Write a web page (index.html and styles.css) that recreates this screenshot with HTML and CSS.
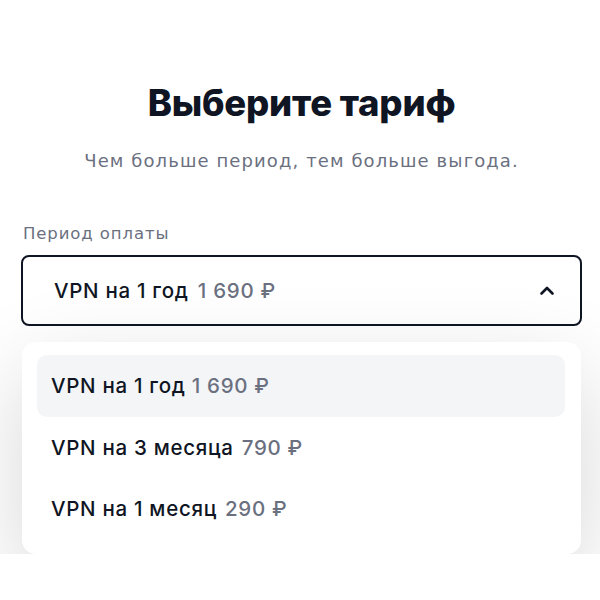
FILE: index.html
```html
<!DOCTYPE html>
<html>
<head>
<title>Выберите тариф</title>
<meta name="viewport" content="width=device-width, initial-scale=1.0">
<link rel="stylesheet" href="styles.css">
</head>
<body>

<div class="container">
    <h1>Выберите тариф</h1>
    <p class="subtitle">Чем больше период, тем больше выгода.</p>

    <label class="field-label">Период оплаты</label>
    <div class="select">
        <span class="plan">VPN на 1 год <span class="price">1 690 ₽</span></span>
        <svg class="chevron" width="18" height="18" viewBox="0 0 18 18">
            <path d="M3.5 11.5 L9 6 L14.5 11.5" fill="none" stroke="#0f1523" stroke-width="2.6" stroke-linecap="round" stroke-linejoin="round"/>
        </svg>
    </div>

    <ul class="options">
        <li class="option active">VPN на 1 год <span class="price">1 690 ₽</span></li>
        <li class="option">VPN на 3 месяца <span class="price">790 ₽</span></li>
        <li class="option">VPN на 1 месяц <span class="price">290 ₽</span></li>
    </ul>
</div>

</body>
</html>
```

FILE: styles.css
```css
body {
    font-family: 'Inter', 'Noto Sans', sans-serif;
    margin: 0;
    background-color: #ffffff;
    color: #0f1523;
}
.container {
    width: 561px;
    margin-left: 21px;
    padding-top: 78px;
}
h1 {
    margin: 0;
    font-size: 36.5px;
    font-weight: 800;
    text-align: center;
    letter-spacing: -0.2px;
    line-height: 50px;
}
.subtitle {
    margin: 21px 0 0;
    text-align: center;
    font-family: 'DejaVu Sans', sans-serif;
    font-size: 18px;
    letter-spacing: 1.1px;
    color: #6b7080;
    line-height: 24px;
}
.field-label {
    display: block;
    margin-top: 50px;
    margin-left: 2px;
    font-family: 'DejaVu Sans', sans-serif;
    font-size: 16.5px;
    letter-spacing: 0.9px;
    color: #6b7080;
    line-height: 22px;
}
.select {
    margin-top: 10px;
    height: 71px;
    border: 2px solid #0f1523;
    border-radius: 8px;
    box-sizing: border-box;
    display: flex;
    align-items: center;
    justify-content: space-between;
    padding: 0 24px 0 31px;
}
.plan, .option {
    font-size: 20.5px;
    font-weight: 500;
    letter-spacing: 0.7px;
}
.price {
    color: #6b7080;
    margin-left: 3px;
}
.options {
    list-style: none;
    margin: 16px 1px 0;
    padding: 13px 16px 14px 15px;
    background: #ffffff;
    border-radius: 14px;
    box-shadow: 0 30px 90px rgba(0, 0, 0, 0.16);
}
.option {
    height: 61.5px;
    display: flex;
    align-items: center;
    padding-left: 14px;
    border-radius: 10px;
}
.option .price {
    margin-left: 8px;
}
.option.active {
    background-color: #f4f5f7;
}
.option.active .price {
    margin-left: 6px;
}
```
